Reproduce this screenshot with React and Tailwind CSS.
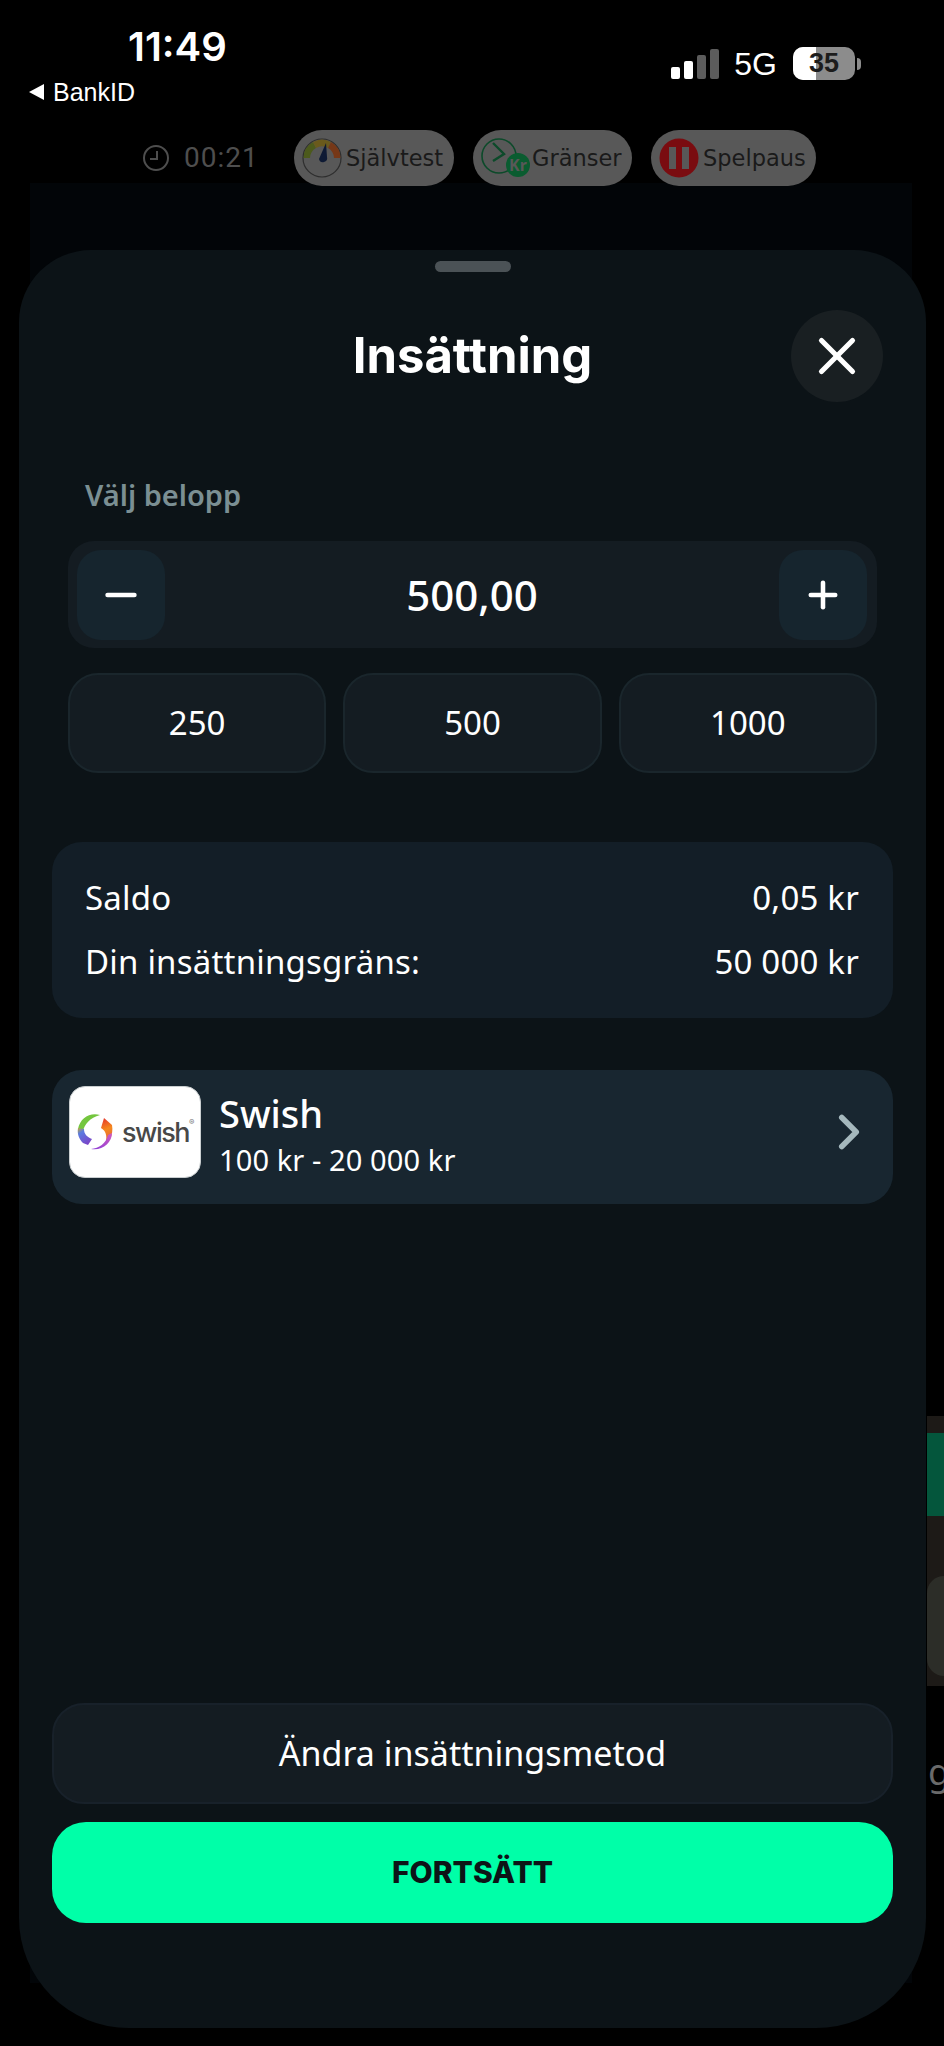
import React from "react";
import { Minus, Plus, X, ChevronRight } from "lucide-react";

const sans = "font-['Noto_Sans',sans-serif]";

const Gauge = () => (
  <svg width="40" height="40" viewBox="0 0 40 40" className="shrink-0">
    <circle cx="20" cy="20" r="19" fill="none" stroke="#2e2e2e" strokeWidth="1.2" />
    <path d="M1.5 20 A18.5 18.5 0 0 1 11 4 L14 10 A12 12 0 0 0 8 20 Z" fill="#4c5a1c" />
    <path d="M11 4 A18.5 18.5 0 0 1 29 4 L26 10 A12 12 0 0 0 14 10 Z" fill="#6a5a1c" />
    <path d="M29 4 A18.5 18.5 0 0 1 38.500 20 L32 20 A12 12 0 0 0 26 10 Z" fill="#763818" />
    <path d="M24 5 L25 19 A4 4 0 0 1 17 21 Z" fill="#0e1a34" />
  </svg>
);

const LimitClock = () => (
  <svg width="47" height="42" viewBox="0 0 47 42" className="shrink-0 overflow-visible">
    <circle cx="18" cy="19" r="17" fill="none" stroke="#0c4a2a" strokeWidth="1.6" />
    <path d="M12 6 L23 17 L12 24" fill="none" stroke="#0c4a2a" strokeWidth="2.4" />
    <circle cx="37" cy="28" r="12" fill="#0a5c30" />
    <text x="37" y="34" textAnchor="middle" fontSize="16" fontWeight="700" fill="#585858" fontFamily="Noto Sans, sans-serif">Kr</text>
  </svg>
);

const PauseBadge = () => (
  <svg width="40" height="40" viewBox="0 0 40 40" className="shrink-0">
    <circle cx="20" cy="20" r="19.500" fill="#7a0c10" />
    <rect x="10" y="9" width="7" height="22" fill="#585858" />
    <rect x="23" y="9" width="7" height="22" fill="#585858" />
  </svg>
);

const SwishMark = () => (
  <svg width="36" height="38" viewBox="0 0 36 38" className="shrink-0">
    <defs>
      <linearGradient id="swishLeft" x1="0" y1="0" x2="0.6" y2="1">
        <stop offset="0" stopColor="#c4a73a" />
        <stop offset="0.3" stopColor="#5a7be0" />
        <stop offset="1" stopColor="#7a45c8" />
      </linearGradient>
      <linearGradient id="swishRight" x1="0.3" y1="0" x2="0.5" y2="1">
        <stop offset="0" stopColor="#e6382c" />
        <stop offset="0.5" stopColor="#f58a1e" />
        <stop offset="1" stopColor="#e2643c" />
      </linearGradient>
      <linearGradient id="swishBottom" x1="1" y1="0" x2="0" y2="1">
        <stop offset="0" stopColor="#d05ac0" />
        <stop offset="1" stopColor="#8a3cd8" />
      </linearGradient>
    </defs>
    {/* green tail */}
    <path d="M23 2 C13 -1 3 5 1 16 L6 19 C7 11 13 5 23 2 Z" fill="#74c63e" />
    {/* left block */}
    <path d="M1 15 C0 21 2 26 6 30 L11 32 L15 26 C10 24 7 21 7 16 Z" fill="url(#swishLeft)" />
    {/* right block */}
    <path d="M27 5 L35 12 C36 17 35 22 33 26 L29 28 C30 23 29 18 24 15 Z" fill="url(#swishRight)" />
    {/* purple tail */}
    <path d="M35 20 C35 30 25 38 14 36 C22 35 29 31 31 22 Z" fill="url(#swishBottom)" />
  </svg>
);

const Pill = ({ icon, label, width }) => (
  <div className={`flex h-[56px] items-center gap-[4px] rounded-full bg-[#585858] pl-[8px] ${width}`}>
    {icon}
    <span className="font-['DejaVu_Sans',sans-serif] text-[22.5px] leading-none text-[#1a1a1a]">{label}</span>
  </div>
);

const QuickAmount = ({ value }) => (
  <button className="flex h-[100px] flex-1 items-center justify-center rounded-[30px] border-2 border-[#1a262c] bg-[#141c22] text-[33px] text-white">
    {value}
  </button>
);

const App = () => {
  return (
    <div className={`relative flex h-[2046px] w-[944px] flex-col overflow-hidden bg-black ${sans}`}>
      {/* page behind the sheet */}
      <div className="absolute left-[30px] top-[183px] h-[1800px] w-[882px] bg-[#020508]" />
      <div className="absolute left-[927px] top-[1416px] h-[270px] w-[17px] bg-[#1d1a17]">
        <div className="mt-[17px] h-[83px] bg-[#04563c]" />
        <div className="mt-[60px] h-[100px] rounded-l-full bg-[#2c2d28]" />
      </div>
      <div className="absolute left-[927px] top-[1750px] h-[56px] w-[17px] overflow-hidden">
        <span className="block pl-[1px] text-[36px] leading-[44px] text-[#6a6a6a]">g</span>
      </div>

      {/* status bar */}
      <div className="relative flex h-[130px] shrink-0 justify-between">
        <div className="pl-[29px]">
          <div className="mt-[26px] pl-[99px] font-['Inter',sans-serif] text-[40px] font-semibold leading-[42px] text-white">11:49</div>
          <div className="mt-[11px] flex items-center gap-[9px] font-['Liberation_Sans',sans-serif] text-[25px] leading-[26px] text-white">
            <span className="h-0 w-0 border-y-[8px] border-r-[15px] border-y-transparent border-r-white" />
            <span>BankID</span>
          </div>
        </div>
        <div className="mr-[83px] mt-[47px] flex h-[33px] items-center">
          <div className="flex h-[30px] items-end gap-[4px]">
            <div className="h-[12px] w-[9px] rounded-[2px] bg-white" />
            <div className="h-[18px] w-[9px] rounded-[2px] bg-white" />
            <div className="h-[24px] w-[9px] rounded-[2px] bg-[#5c5c5c]" />
            <div className="h-[30px] w-[9px] rounded-[2px] bg-[#5c5c5c]" />
          </div>
          <span className="ml-[15px] font-['Liberation_Sans',sans-serif] text-[32px] leading-none text-white">5G</span>
          <div className="relative ml-[16px] flex h-[33px] w-[62px] items-center justify-center overflow-hidden rounded-[10px] bg-[#8c8c8c]">
            <div className="absolute inset-y-0 left-0 w-[23px] bg-white" />
            <span className="relative font-['Liberation_Sans',sans-serif] text-[27px] font-bold leading-none text-[#1c1c1c]">35</span>
          </div>
          <div className="ml-[2px] h-[12px] w-[4px] rounded-r-full bg-[#8c8c8c]" />
        </div>
      </div>

      {/* top pills */}
      <div className="relative flex h-[56px] shrink-0 items-center pl-[143px]">
        <svg width="26" height="26" viewBox="0 0 26 26" fill="none" stroke="#4e4e4e" strokeWidth="2" className="shrink-0">
          <circle cx="13" cy="13" r="12" />
          <path d="M14 6 V14 H7" />
        </svg>
        <span className="ml-[15px] mr-[38px] w-[72px] font-['Roboto',sans-serif] text-[28px] leading-none tracking-[1px] text-[#4e4e4e]">00:21</span>
        <div className="flex gap-[19px]">
          <Pill icon={<Gauge />} label="Självtest" width="w-[160px]" />
          <Pill icon={<LimitClock />} label="Gränser" width="w-[159px]" />
          <Pill icon={<PauseBadge />} label="Spelpaus" width="w-[165px]" />
        </div>
      </div>

      {/* sheet */}
      <div className="relative ml-[19px] mt-[64px] flex h-[1778px] w-[907px] flex-col rounded-t-[72px] rounded-b-[110px] bg-[#0c1317] px-[33px] pb-[105px]">
        <div className="mx-auto mt-[11px] h-[11px] w-[76px] rounded-full bg-[#4b5256]" />

        <div className="relative mt-[38px] flex h-[92px] items-center justify-center">
          <h1 className="-mt-[2px] font-['Inter',sans-serif] text-[49px] font-bold leading-none text-white">Insättning</h1>
          <button className="absolute right-[10px] top-0 flex h-[92px] w-[92px] items-center justify-center rounded-full bg-[#191f22] text-white">
            <X size={62} strokeWidth={2} />
          </button>
        </div>

        <div className="mt-[74px] pl-[33px] text-[29px] font-semibold leading-[38px] text-[#7b8f93]">Välj belopp</div>

        <div className="mx-[16px] mt-[27px]">
          <div className="flex h-[107px] items-center justify-between rounded-[26px] bg-[#141c22] pl-[9px] pr-[10px]">
            <button className="flex h-[90px] w-[88px] items-center justify-center rounded-[24px] bg-[#16252e] text-white">
              <Minus size={46} strokeWidth={2.4} />
            </button>
            <span className="text-[42px] font-medium leading-none text-white">500,00</span>
            <button className="flex h-[90px] w-[88px] items-center justify-center rounded-[24px] bg-[#16252e] text-white">
              <Plus size={42} strokeWidth={2.6} />
            </button>
          </div>
          <div className="mt-[25px] flex gap-[17px]">
            <QuickAmount value="250" />
            <QuickAmount value="500" />
            <QuickAmount value="1000" />
          </div>
        </div>

        <div className="mt-[69px] flex h-[176px] flex-col justify-center gap-[20px] rounded-[30px] bg-[#131e27] pl-[33px] pr-[34px] text-[33px] leading-[44px] tracking-[0.2px] text-white">
          <div className="flex justify-between">
            <span>Saldo</span>
            <span>0,05 kr</span>
          </div>
          <div className="flex justify-between">
            <span>Din insättningsgräns:</span>
            <span>50 000 kr</span>
          </div>
        </div>

        <div className="mt-[52px] flex h-[134px] items-start rounded-[30px] bg-[#182630] pl-[17px] pr-[15px]">
          <div className="mt-[16px] flex h-[92px] w-[132px] items-center gap-[9px] rounded-[16px] border border-[#c9ced0] bg-white pl-[7px]">
            <SwishMark />
            <span className="relative font-['Inter',sans-serif] text-[27px] font-medium leading-none tracking-[-1.5px] text-[#484848]">
              swish
              <sup className="absolute left-full top-[3px] text-[8px] font-normal tracking-normal text-[#777]">®</sup>
            </span>
          </div>
          <div className="ml-[18px] mt-[20px] flex-1">
            <div className="text-[38px] font-medium leading-[46px] text-white">Swish</div>
            <div className="mt-[5px] text-[29px] leading-[38px] tracking-[0.1px] text-white">100 kr - 20 000 kr</div>
          </div>
          <ChevronRight size={58} strokeWidth={2.3} className="mt-[33px] text-[#a5b8bd]" />
        </div>

        <div className="mt-auto flex flex-col gap-[18px]">
          <button className="h-[101px] rounded-[32px] border-2 border-[#18212a] bg-[#141c22] text-[34px] text-white">
            Ändra insättningsmetod
          </button>
          <button className="h-[101px] rounded-[34px] bg-[#00ffa8] font-['Inter',sans-serif] text-[30px] font-extrabold text-[#0d1417]">
            FORTSÄTT
          </button>
        </div>
      </div>
    </div>
  );
};

export default App;
